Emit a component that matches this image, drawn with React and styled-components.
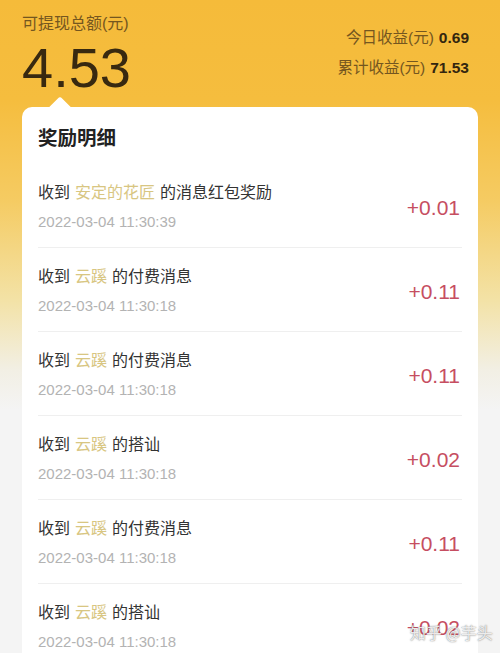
import React from "react";
import styled, { createGlobalStyle } from "styled-components";

const GlobalStyle = createGlobalStyle`
  html, body { margin: 0; padding: 0; }
  body {
    width: 500px;
    height: 653px;
    overflow: hidden;
    background: linear-gradient(to bottom, #f5bb3a 0px, #f5bd3e 100px, #f5cb62 200px, #f3e2a6 300px, #f2efe4 370px, #f4f4f4 410px, #f4f4f4 100%);
    font-family: "Liberation Sans", "Noto Sans CJK SC", sans-serif;
  }
`;

const Page = styled.div`
  position: relative;
  width: 500px;
  height: 653px;
  overflow: hidden;
`;

const Header = styled.header`
  display: flex;
  justify-content: space-between;
  padding: 13px 31px 0 22px;
`;

const Balance = styled.div`
  display: flex;
  flex-direction: column;
`;

const BalanceLabel = styled.div`
  font-size: 16px;
  line-height: 22px;
  color: #74561f;
`;

const BalanceValue = styled.div`
  margin-top: 5px;
  font-size: 56px;
  line-height: 56px;
  color: #382910;
`;

const Stats = styled.div`
  display: flex;
  flex-direction: column;
  align-items: flex-end;
  padding-top: 10px;
`;

const StatLine = styled.div`
  font-size: 15.5px;
  line-height: 30px;
  color: #74561f;
  white-space: nowrap;
`;

const StatValue = styled.b`
  color: #33260f;
  font-weight: 700;
  margin-left: 5px;
`;

const Card = styled.section`
  position: relative;
  margin: 11px 22px 0;
  background: #ffffff;
  border-radius: 10px 10px 0 0;
  padding: 0 16px;
  min-height: 560px;
`;

const Notch = styled.span`
  position: absolute;
  left: 29px;
  top: -7px;
  width: 18px;
  height: 18px;
  background: #ffffff;
  border-radius: 3px 0 0 0;
  transform: rotate(45deg);
`;

const CardTitle = styled.h2`
  margin: 0;
  height: 57px;
  display: flex;
  align-items: center;
  padding-top: 2px;
  box-sizing: border-box;
  font-size: 19.5px;
  font-weight: 700;
  color: #222222;
`;

const Row = styled.div`
  display: flex;
  justify-content: space-between;
  align-items: center;
  height: 84px;
  border-bottom: 1px solid #efefef;
  box-sizing: border-box;
`;

const RowText = styled.div`
  display: flex;
  flex-direction: column;
  padding-top: 2px;
`;

const RowTitle = styled.div`
  font-size: 16px;
  line-height: 22px;
  color: #333333;
  white-space: nowrap;
`;

const Name = styled.span`
  color: #d8c682;
  margin: 0 5px;
`;

const RowDate = styled.div`
  margin-top: 8px;
  font-size: 15px;
  line-height: 20px;
  color: #b3b3b3;
`;

const Amount = styled.div`
  font-size: 21px;
  color: #c64e61;
  padding-right: 2px;
  padding-top: 4px;
`;

const Watermark = styled.div`
  position: absolute;
  left: 410px;
  top: 621px;
  font-family: "Noto Sans CJK SC", sans-serif;
  font-size: 16px;
  line-height: 22px;
  color: rgba(255, 255, 255, 0.85);
  text-shadow: 0 0 1px rgba(90, 90, 90, 0.7), 0 0 2px rgba(90, 90, 90, 0.4);
  white-space: nowrap;
`;

const rows = [
  { name: "安定的花匠", msg: "的消息红包奖励", time: "2022-03-04 11:30:39", amount: "+0.01" },
  { name: "云蹊", msg: "的付费消息", time: "2022-03-04 11:30:18", amount: "+0.11" },
  { name: "云蹊", msg: "的付费消息", time: "2022-03-04 11:30:18", amount: "+0.11" },
  { name: "云蹊", msg: "的搭讪", time: "2022-03-04 11:30:18", amount: "+0.02" },
  { name: "云蹊", msg: "的付费消息", time: "2022-03-04 11:30:18", amount: "+0.11" },
  { name: "云蹊", msg: "的搭讪", time: "2022-03-04 11:30:18", amount: "+0.02" },
];

export default function App() {
  return (
    <Page>
      <GlobalStyle />
      <Header>
        <Balance>
          <BalanceLabel>可提现总额(元)</BalanceLabel>
          <BalanceValue>4.53</BalanceValue>
        </Balance>
        <Stats>
          <StatLine>
            今日收益(元)<StatValue>0.69</StatValue>
          </StatLine>
          <StatLine>
            累计收益(元)<StatValue>71.53</StatValue>
          </StatLine>
        </Stats>
      </Header>
      <Card>
        <Notch />
        <CardTitle>奖励明细</CardTitle>
        {rows.map((r, i) => (
          <Row key={i}>
            <RowText>
              <RowTitle>
                收到<Name>{r.name}</Name>{r.msg}
              </RowTitle>
              <RowDate>{r.time}</RowDate>
            </RowText>
            <Amount>{r.amount}</Amount>
          </Row>
        ))}
      </Card>
      <Watermark>知乎 @芋头</Watermark>
    </Page>
  );
}
